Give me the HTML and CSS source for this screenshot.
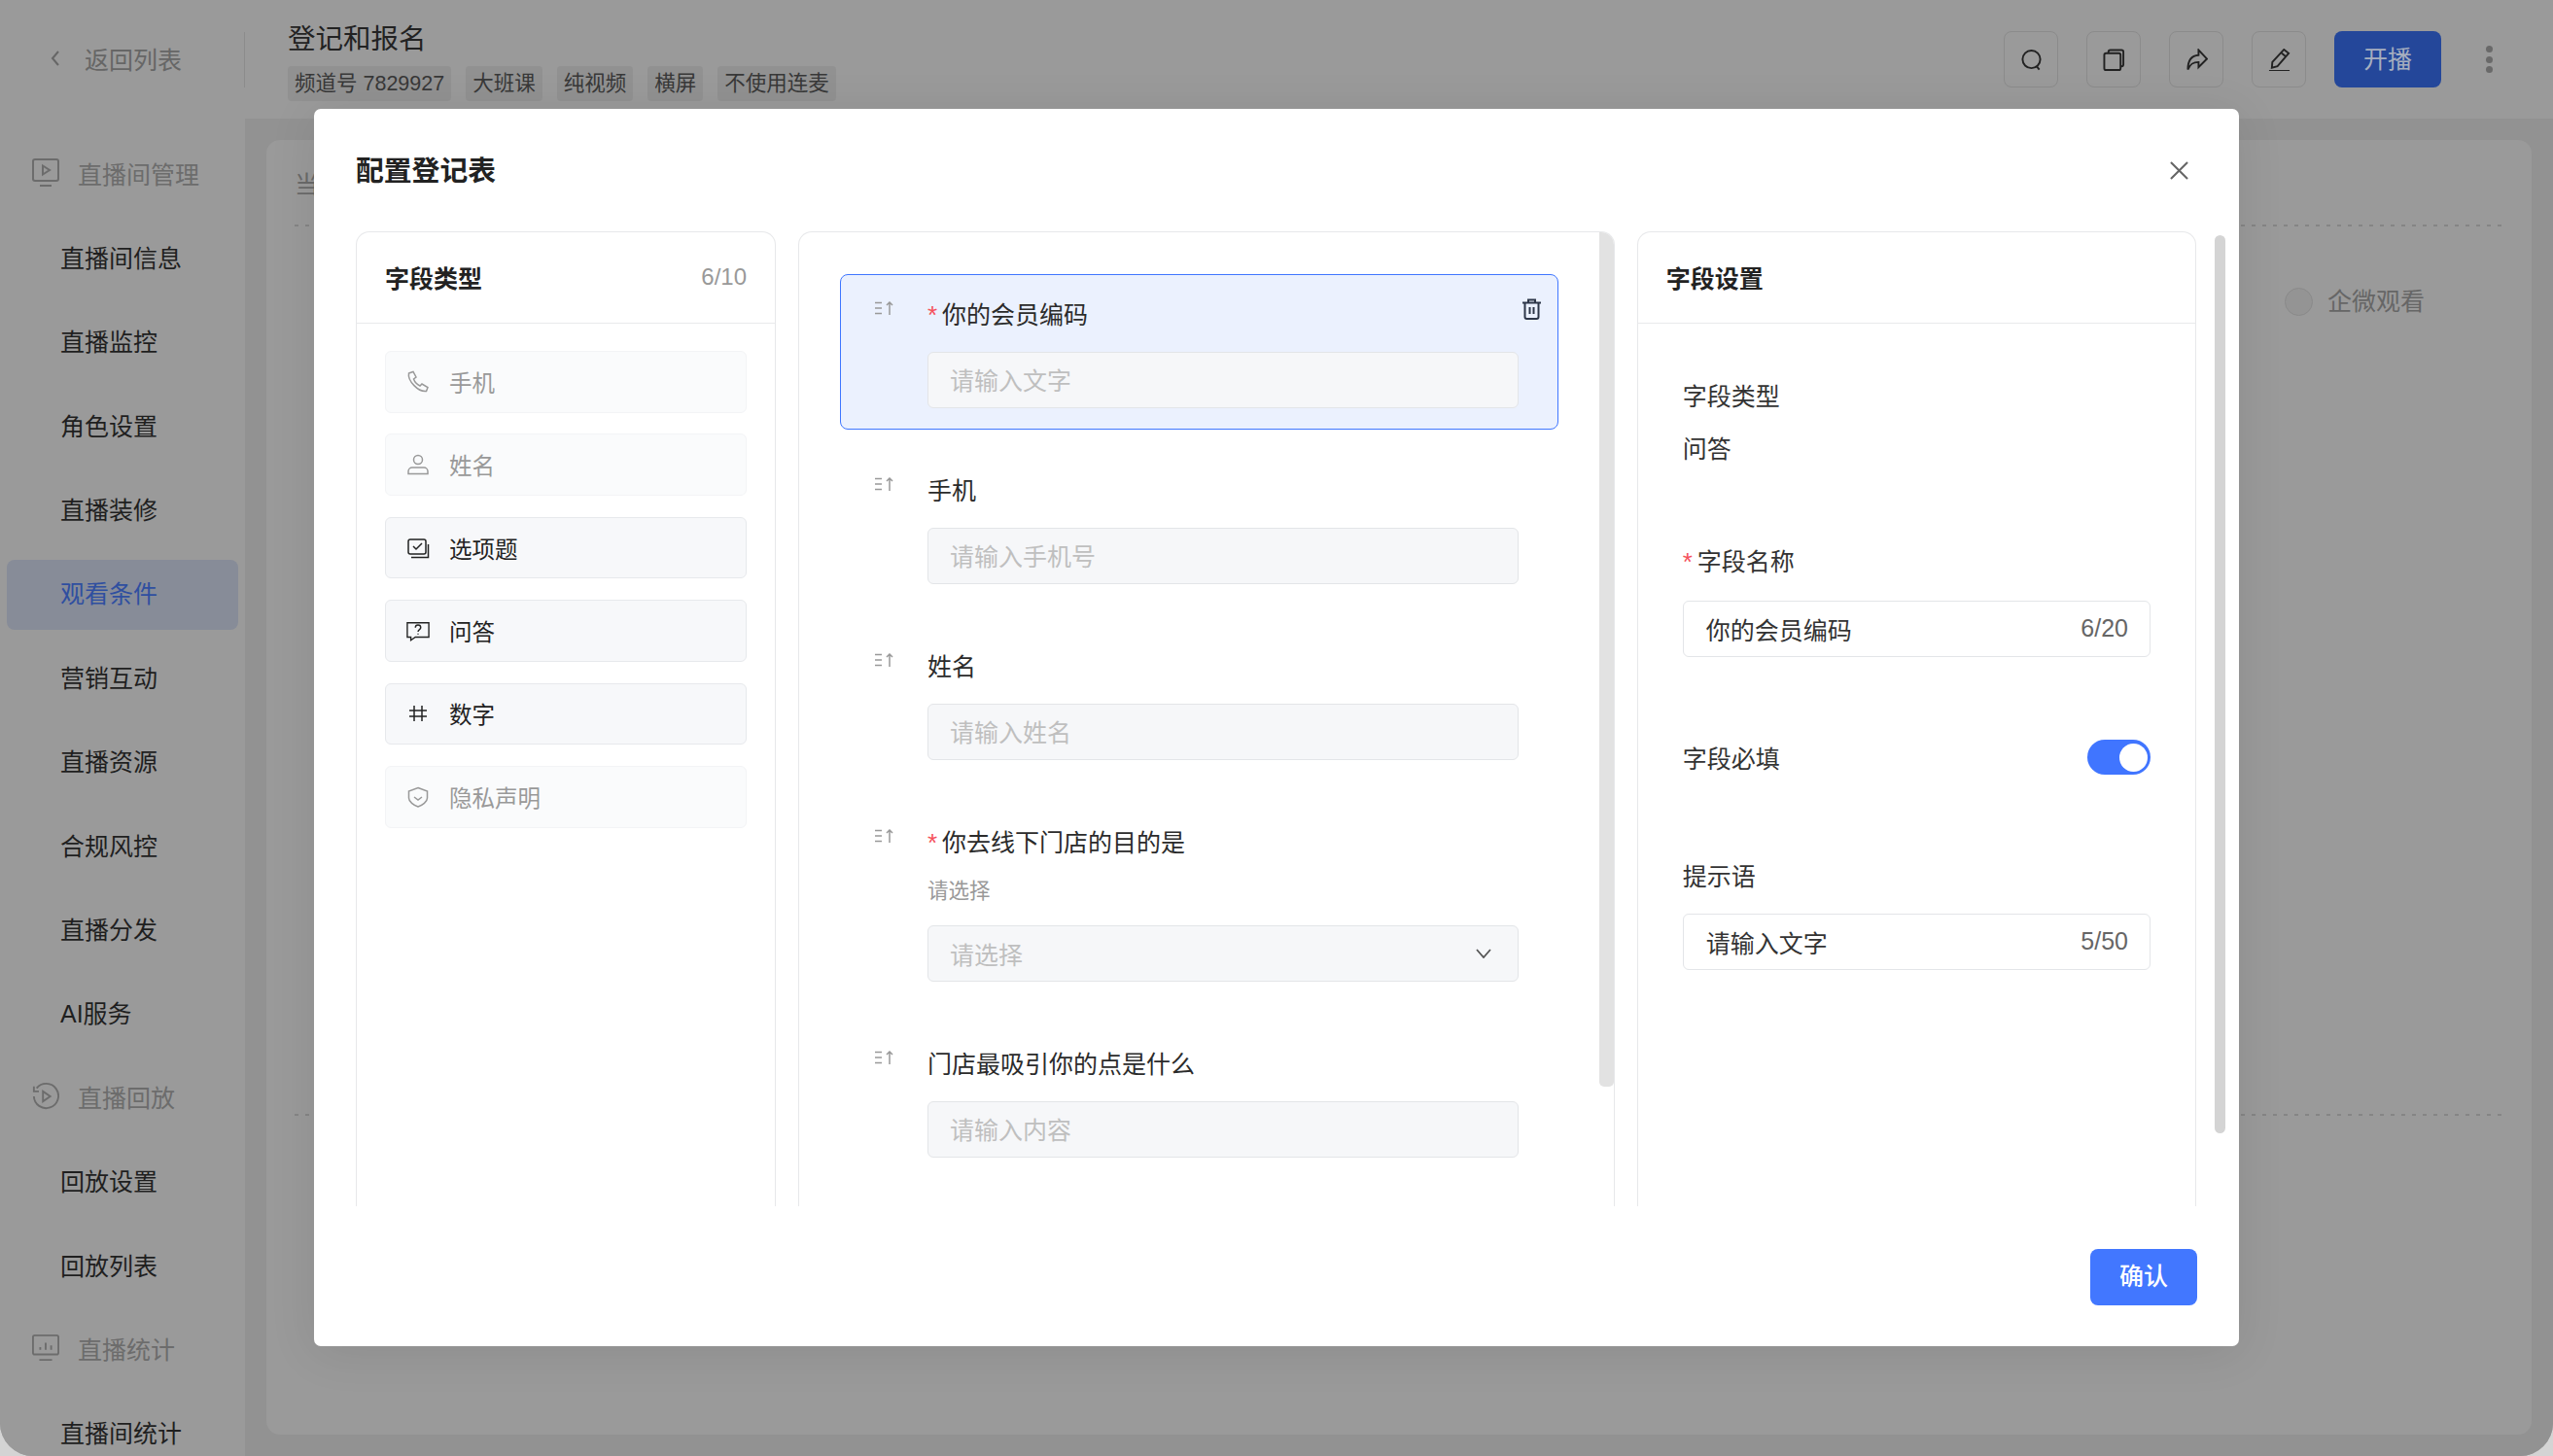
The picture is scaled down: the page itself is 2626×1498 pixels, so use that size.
FILE: index.html
```html
<!DOCTYPE html>
<html lang="zh-CN">
<head>
    <meta charset="UTF-8">
    <meta name="viewport" content="width=device-width, initial-scale=1.0">
    <title>配置登记表</title>
    <link rel="stylesheet" href="styles.css">
</head>
<body>
    <div class="shell">
        <!-- Top bar -->
        <header class="topbar">
            <div class="back">
                <svg class="back-icon" viewBox="0 0 12 20"><path d="M9 3 3 10l6 7"/></svg>
                <span>返回列表</span>
            </div>
            <div class="topbar-divider"></div>
            <div class="room-info">
                <div class="room-title">登记和报名</div>
                <div class="room-tags">
                    <span class="tag">频道号 7829927</span>
                    <span class="tag">大班课</span>
                    <span class="tag">纯视频</span>
                    <span class="tag">横屏</span>
                    <span class="tag">不使用连麦</span>
                </div>
            </div>
            <div class="actions">
                <div class="icon-btn"><svg viewBox="0 0 24 24"><circle cx="12" cy="11.500" r="9.500"/><path d="m17.500 19 3 3.500"/></svg></div>
                <div class="icon-btn"><svg viewBox="0 0 24 24"><rect x="1.500" y="5" width="17.500" height="18" rx="2"/><path d="M6 5V3.500A2 2 0 0 1 8 1.500h12a2 2 0 0 1 2 2V17a2 2 0 0 1-2 2h-1"/></svg></div>
                <div class="icon-btn"><svg viewBox="0 0 24 24"><path d="M14 1.500 23 11l-9 9v-5.500c-6 0-9 2-11.500 8C2.500 14 6 7.500 14 7z"/></svg></div>
                <div class="icon-btn"><svg viewBox="0 0 24 24"><path d="M17 1 22 5 10 19l-6 1.500 .5-6zM14 4.500l5 4M1 24h22"/></svg></div>
                <div class="start-btn">开播</div>
                <div class="more"><i></i><i></i><i></i></div>
            </div>
        </header>

        <div class="app-body">
            <!-- Sidebar -->
            <aside class="sidebar">
                <div class="nav-item nav-group">
                    <svg viewBox="0 0 28 30"><rect x="1" y="1" width="26" height="22" rx="2"/><path d="M11 7.500v9l7-4.500zM8 28h12"/></svg>
                    <span>直播间管理</span>
                </div>
                <div class="nav-item">直播间信息</div>
                <div class="nav-item">直播监控</div>
                <div class="nav-item">角色设置</div>
                <div class="nav-item">直播装修</div>
                <div class="nav-item active">观看条件</div>
                <div class="nav-item">营销互动</div>
                <div class="nav-item">直播资源</div>
                <div class="nav-item">合规风控</div>
                <div class="nav-item">直播分发</div>
                <div class="nav-item">AI服务</div>
                <div class="nav-item nav-group">
                    <svg viewBox="0 0 30 30"><path d="M5 6a13.500 13.500 0 1 1-3 9M2 4v5.500h5.500"/><path d="M12 9.500v11l8-5.500z"/></svg>
                    <span>直播回放</span>
                </div>
                <div class="nav-item">回放设置</div>
                <div class="nav-item">回放列表</div>
                <div class="nav-item nav-group">
                    <svg viewBox="0 0 30 30"><rect x="1" y="1" width="28" height="21" rx="2"/><path d="M9 17v-3M15 17V9M21 17v-5M8 28h14"/></svg>
                    <span>直播统计</span>
                </div>
                <div class="nav-item">直播间统计</div>
            </aside>

            <!-- Page behind the dialog -->
            <main class="main">
                <section class="card">
                    <div class="card-head">当前</div>
                    <div class="dots"></div>
                    <div class="radio-row">
                        <span class="radio"></span>
                        <span>企微观看</span>
                    </div>
                    <div class="dots"></div>
                </section>
            </main>
        </div>

        <!-- Dialog -->
        <div class="modal">
            <div class="modal-head">
                <h2>配置登记表</h2>
                <svg class="close" viewBox="0 0 20 20"><path d="m1 1 18 18M19 1 1 19"/></svg>
            </div>

            <div class="panels">
                <section class="panel panel-types">
                    <div class="panel-head">
                        <h3>字段类型</h3>
                        <span class="count">6/10</span>
                    </div>
                    <div class="type-list">
                        <div class="type-item disabled">
                            <svg viewBox="0 0 24 24"><path d="M2.500 3 7 1.500l3 5.500-2.500 2c1 3 3.500 5.500 6.500 7l2-2 6 3.500-1.500 4C12.500 22.500 1 11 2.500 3z"/></svg>
                            <span>手机</span>
                        </div>
                        <div class="type-item disabled">
                            <svg viewBox="0 0 24 24"><circle cx="12" cy="7" r="4.500"/><path d="M2 21.500v-2.500a4 4 0 0 1 4-4h12a4 4 0 0 1 4 4v2.500z"/></svg>
                            <span>姓名</span>
                        </div>
                        <div class="type-item">
                            <svg viewBox="0 0 24 24"><rect x="2" y="3" width="18" height="15" rx="2"/><path d="m7 10 3 3 6-6M5 21.500h17.500V8"/></svg>
                            <span>选项题</span>
                        </div>
                        <div class="type-item">
                            <svg viewBox="0 0 26 24"><path d="M1 3h24v16H10l-5 3.500V19H1z"/><path d="M10 8.500c0-4 6-4 6 0 0 2-3 2-3 4.500M13 15v1"/></svg>
                            <span>问答</span>
                        </div>
                        <div class="type-item">
                            <svg viewBox="0 0 24 24"><path d="M8 4v16M16 4v16M3 9h18M3 15h18"/></svg>
                            <span>数字</span>
                        </div>
                        <div class="type-item disabled">
                            <svg viewBox="0 0 24 24"><path d="M12 2.500 21.500 6v7c0 4-5 7.500-9.500 9C7.500 20.500 2.500 17 2.500 13V6z"/><path d="m8 12 4 3 4-3"/></svg>
                            <span>隐私声明</span>
                        </div>
                    </div>
                </section>

                <section class="panel panel-form">
                    <div class="field selected">
                        <svg class="sort" viewBox="0 0 19 14"><path d="M0 1.500h7M0 7h7M0 12.500h7M15 14V1M12 4l3-3 3 3"/></svg>
                        <div class="field-body">
                            <div class="field-label"><span class="req">*</span>你的会员编码</div>
                            <div class="fake-input">请输入文字</div>
                        </div>
                        <svg class="trash" viewBox="0 0 21 22"><path d="M1 4.500h19M7 4.500V1.500h7v3M3.500 4.500V19a2 2 0 0 0 2 2h10a2 2 0 0 0 2-2V4.500M8.500 9v7M12.500 9v7"/></svg>
                    </div>
                    <div class="field">
                        <svg class="sort" viewBox="0 0 19 14"><path d="M0 1.500h7M0 7h7M0 12.500h7M15 14V1M12 4l3-3 3 3"/></svg>
                        <div class="field-body">
                            <div class="field-label">手机</div>
                            <div class="fake-input">请输入手机号</div>
                        </div>
                    </div>
                    <div class="field">
                        <svg class="sort" viewBox="0 0 19 14"><path d="M0 1.500h7M0 7h7M0 12.500h7M15 14V1M12 4l3-3 3 3"/></svg>
                        <div class="field-body">
                            <div class="field-label">姓名</div>
                            <div class="fake-input">请输入姓名</div>
                        </div>
                    </div>
                    <div class="field">
                        <svg class="sort" viewBox="0 0 19 14"><path d="M0 1.500h7M0 7h7M0 12.500h7M15 14V1M12 4l3-3 3 3"/></svg>
                        <div class="field-body">
                            <div class="field-label"><span class="req">*</span>你去线下门店的目的是</div>
                            <div class="field-hint">请选择</div>
                            <div class="fake-input fake-select">
                                <span>请选择</span>
                                <svg viewBox="0 0 16 10"><path d="m1 1 7 8 7-8"/></svg>
                            </div>
                        </div>
                    </div>
                    <div class="field">
                        <svg class="sort" viewBox="0 0 19 14"><path d="M0 1.500h7M0 7h7M0 12.500h7M15 14V1M12 4l3-3 3 3"/></svg>
                        <div class="field-body">
                            <div class="field-label">门店最吸引你的点是什么</div>
                            <div class="fake-input">请输入内容</div>
                        </div>
                    </div>
                    <div class="form-scroll"></div>
                </section>

                <section class="panel panel-settings">
                    <div class="panel-head">
                        <h3>字段设置</h3>
                    </div>
                    <div class="settings-body">
                        <div class="set-line">字段类型</div>
                        <div class="set-line set-value">问答</div>
                        <div class="set-line set-name"><span class="req">*</span>字段名称</div>
                        <div class="text-box">
                            <span>你的会员编码</span>
                            <span class="box-count">6/20</span>
                        </div>
                        <div class="set-switch">
                            <span>字段必填</span>
                            <span class="switch"><i></i></span>
                        </div>
                        <div class="set-line set-tip">提示语</div>
                        <div class="text-box">
                            <span>请输入文字</span>
                            <span class="box-count">5/50</span>
                        </div>
                    </div>
                </section>
            </div>

            <div class="modal-foot">
                <div class="confirm">确认</div>
            </div>
            <div class="modal-scroll"></div>
        </div>
    </div>
</body>
</html>
```

FILE: styles.css
```css
/* Base */
* {
    margin: 0;
    padding: 0;
    box-sizing: border-box;
    font-family: "Liberation Sans", "Noto Sans CJK SC", sans-serif;
}

body {
    background-color: #d4d4d4;
    height: 100vh;
    overflow: hidden;
}

svg {
    display: block;
    fill: none;
    stroke: currentColor;
    stroke-width: 2;
}

.shell {
    position: relative;
    height: 100vh;
    display: flex;
    flex-direction: column;
    background-color: #9a9a9a;
    border-radius: 0 0 34px 34px;
    overflow: hidden;
    font-size: 25px;
}

/* Top bar */
.topbar {
    height: 122px;
    flex-shrink: 0;
    display: flex;
    align-items: center;
    background-color: #9a9a9a;
}

.back {
    width: 251px;
    display: flex;
    align-items: center;
    padding-left: 51px;
    gap: 24px;
    color: #666;
    margin-top: -2px;
}

.back-icon {
    width: 12px;
    height: 20px;
}

.topbar-divider {
    width: 1px;
    height: 57px;
    background-color: #8c8c8c;
}

.room-info {
    align-self: flex-start;
    margin-left: 44px;
    padding-top: 20px;
}

.room-title {
    font-size: 28.500px;
    line-height: 40px;
    color: #222;
}

.room-tags {
    display: flex;
    gap: 15px;
    margin-top: 8px;
}

.tag {
    height: 36px;
    line-height: 36px;
    padding: 0 7px;
    border-radius: 4px;
    font-size: 21.500px;
    color: #383838;
    background-color: #919191;
}

.actions {
    margin-left: auto;
    display: flex;
    align-items: center;
    gap: 29px;
    padding-right: 62px;
}

.icon-btn {
    width: 56px;
    height: 58px;
    display: flex;
    align-items: center;
    justify-content: center;
    border: 1.500px solid #8b8b8b;
    border-radius: 8px;
    color: #222;
}

.icon-btn svg {
    width: 23px;
    height: 23px;
}

.start-btn {
    width: 110px;
    height: 58px;
    line-height: 58px;
    text-align: center;
    border-radius: 8px;
    background-color: #24479a;
    color: #a6aebf;
}

.more {
    display: flex;
    flex-direction: column;
    gap: 3.500px;
    margin-left: 17px;
}

.more i {
    width: 7px;
    height: 7px;
    border-radius: 50%;
    background-color: #696969;
}

/* Sidebar */
.app-body {
    flex: 1;
    display: flex;
    min-height: 0;
}

.sidebar {
    width: 252px;
    flex-shrink: 0;
    padding-top: 22px;
    overflow: hidden;
    background-color: #9a9a9a;
}

.nav-item {
    width: 238px;
    height: 72px;
    margin: 0 0 14.400px 7px;
    padding: 0 0 5px 55px;
    display: flex;
    align-items: center;
    border-radius: 8px;
    color: #1f1f1f;
}

.nav-item.active {
    background-color: #878c98;
    color: #2f4fa0;
}

.nav-group {
    padding-left: 26px;
    gap: 19px;
    color: #6c6c6c;
}

.nav-group svg {
    width: 28px;
    height: 30px;
}

/* Page behind the dialog */
.main {
    flex: 1;
    padding: 22px;
    background-color: #929292;
}

.card {
    height: 100%;
    padding: 0 31px 0 29px;
    border-radius: 14px;
    background-color: #9a9a9a;
}

.card-head {
    height: 87px;
    display: flex;
    align-items: center;
    color: #6a6a6a;
}

.dots {
    height: 2px;
    background-image: repeating-linear-gradient(to right, #858585 0 4px, transparent 4px 11px);
}

.radio-row {
    height: 913px;
    padding: 63px 79px 0 0;
    display: flex;
    justify-content: flex-end;
    gap: 15px;
    color: #666;
    line-height: 28px;
}

.radio {
    width: 29px;
    height: 29px;
    border: 1px solid #8a8a8a;
    border-radius: 50%;
    background-color: #949494;
}

/* Dialog */
.modal {
    position: absolute;
    left: 323px;
    top: 112px;
    width: 1980px;
    height: 1273px;
    display: flex;
    flex-direction: column;
    border-radius: 7px;
    background-color: #fff;
    box-shadow: 0 6px 50px rgba(0, 0, 0, 0.09);
}

.modal-head {
    height: 126px;
    flex-shrink: 0;
    display: flex;
    align-items: center;
    justify-content: space-between;
    padding: 0 52px 0 43px;
}

.modal-head h2 {
    margin-bottom: 3px;
    font-size: 28.800px;
    font-weight: 600;
    color: #222;
}

.close {
    width: 19px;
    height: 19px;
    color: #666;
    stroke-width: 2.200;
}

.panels {
    height: 1003px;
    flex-shrink: 0;
    display: flex;
    margin: 0 44px 0 43px;
    gap: 23px;
}

.panel {
    position: relative;
    overflow: hidden;
    border: 1.500px solid #e7e8ea;
    border-bottom: none;
    border-radius: 14px 14px 0 0;
}

.panel-types {
    width: 432px;
}

.panel-form {
    width: 841px;
    padding: 43px 57px 0 42px;
}

.panel-settings {
    width: 576px;
}

.panel-head {
    height: 94px;
    display: flex;
    align-items: center;
    justify-content: space-between;
    padding: 0 28.500px 2px 29px;
    border-bottom: 1.500px solid #e9eaec;
}

.panel-head h3 {
    font-size: 25px;
    font-weight: 600;
    color: #222;
}

.count {
    font-size: 24px;
    color: #999;
}

/* Field types */
.type-list {
    display: flex;
    flex-direction: column;
    gap: 21.800px;
    padding: 28px 29px 0;
}

.type-item {
    height: 63.600px;
    display: flex;
    align-items: center;
    gap: 20px;
    padding-left: 21px;
    border: 1.500px solid #e7e9ec;
    border-radius: 6px;
    background-color: #f7f8fa;
    font-size: 23.500px;
    color: #222;
}

.type-item.disabled {
    border-color: #f3f4f6;
    background-color: #fafbfc;
    color: #999;
}

.type-item svg {
    width: 24px;
    height: 24px;
    flex-shrink: 0;
    stroke-width: 1.500;
}

/* Form preview */
.field {
    position: relative;
    display: flex;
    padding: 0 0 21px 35px;
    margin-bottom: 21px;
    border: 1.500px solid transparent;
    border-radius: 8px;
}

.field.selected {
    border-color: #3f76ff;
    background-color: #ebf1fe;
}

.sort {
    width: 19px;
    height: 14px;
    margin-top: 27px;
    flex-shrink: 0;
    color: #999;
    stroke-width: 1.500;
}

.field-body {
    width: 608px;
    margin-left: 35.500px;
}

.field-label {
    height: 79px;
    line-height: 82px;
    color: #2b2b2b;
}

.req {
    display: inline-block;
    width: 15px;
    color: #f5525c;
    font-size: 26px;
    line-height: 1;
}

.field-hint {
    height: 47px;
    margin-top: -0.500px;
    font-size: 21.500px;
    line-height: 24px;
    color: #999;
}

.fake-input {
    height: 58px;
    display: flex;
    align-items: center;
    padding: 0 0 2px 22px;
    border: 1.500px solid #e3e5e8;
    border-radius: 6px;
    background-color: #f6f7f9;
    color: #bfbfbf;
}

.fake-select {
    justify-content: space-between;
    padding: 0 27px 0 22px;
}

.fake-select svg {
    width: 16px;
    height: 10px;
    color: #555;
    stroke-width: 1.800;
}

.trash {
    position: absolute;
    right: 16px;
    top: 24px;
    width: 21px;
    height: 22px;
    color: #2d3648;
}

.form-scroll {
    position: absolute;
    right: 0;
    top: 0;
    width: 15px;
    height: 879px;
    border-radius: 0 0 5px 5px;
    background-color: #e2e2e2;
}

/* Field settings */
.settings-body {
    padding: 48px 46px 0 46px;
    color: #333;
}

.set-line {
    line-height: 54px;
}

.set-name {
    margin-top: 62px;
}

.text-box {
    height: 58px;
    display: flex;
    align-items: center;
    justify-content: space-between;
    padding: 0 22px 1px 23px;
    border: 1.500px solid #e3e5e8;
    border-radius: 6px;
}

.set-name + .text-box {
    margin-top: 13px;
}

.box-count {
    font-size: 25px;
    color: #666;
}

.set-switch {
    display: flex;
    align-items: center;
    justify-content: space-between;
    margin-top: 85px;
}

.switch {
    width: 65px;
    height: 36px;
    display: flex;
    align-items: center;
    justify-content: flex-end;
    padding-right: 3.500px;
    border-radius: 18px;
    background-color: #4075ff;
}

.switch i {
    width: 29px;
    height: 29px;
    border-radius: 50%;
    background-color: #fff;
}

.set-tip {
    margin-top: 78px;
    margin-bottom: 11px;
}

/* Footer */
.modal-foot {
    display: flex;
    justify-content: flex-end;
    padding: 44px 43px 0 0;
}

.confirm {
    width: 110px;
    height: 58px;
    line-height: 56px;
    text-align: center;
    border-radius: 8px;
    background-color: #4277ff;
    color: #fff;
    font-weight: 500;
}

.modal-scroll {
    position: absolute;
    right: 14px;
    top: 130px;
    width: 11px;
    height: 924px;
    border-radius: 6px;
    background-color: #d4d4d4;
}
```
